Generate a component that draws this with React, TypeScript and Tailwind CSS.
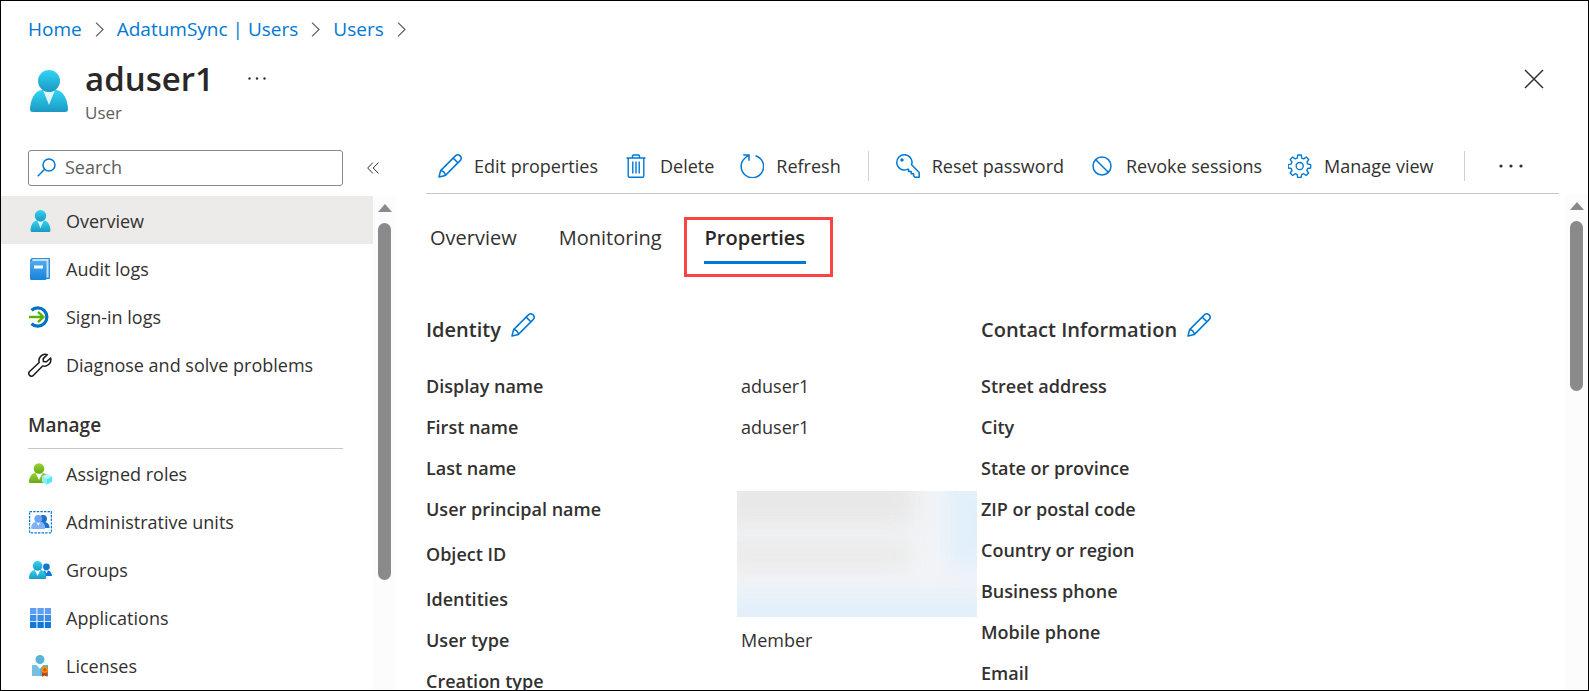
import React from "react";

type IconProps = { className?: string };

const Pencil = ({ className }: IconProps) => (
  <svg viewBox="0 0 24 24" className={className} fill="none" stroke="#0078d4" strokeWidth="1.5" strokeLinejoin="round">
    <path d="M1 23 L2.6 16.6 L17.4 1.9 A3.2 3.2 0 0 1 22.1 6.6 L7.4 21.4 Z M15.2 4.1 L19.9 8.8 M2.6 16.6 Q6.4 17 7.4 21.4" />
  </svg>
);

const Trash = () => (
  <svg viewBox="0 0 20 24" className="h-6 w-5" fill="none" stroke="#0078d4" strokeWidth="1.4" strokeLinejoin="round">
    <path d="M0.5 4 H19.5 M6.5 4 V2 Q6.5 1 7.5 1 H12.5 Q13.5 1 13.5 2 V4 M2.2 4 V22 Q2.2 23.2 3.4 23.2 H16.600 Q17.8 23.2 17.8 22 V4 M6.8 7.5 V19.5 M10 7.5 V19.5 M13.2 7.5 V19.5" />
  </svg>
);

const Refresh = () => (
  <svg viewBox="0 0 24 24" className="size-6" fill="none" stroke="#0078d4" strokeWidth="1.5">
    <path d="M15.500 1.700 A11.200 11.200 0 1 1 5 4 L8.800 1.200 M3.200 1 H9 V6.800" />
  </svg>
);

const Key = () => (
  <svg viewBox="0 0 24 24" className="size-6" fill="none" stroke="#0078d4" strokeWidth="1.5" strokeLinejoin="round">
    <path d="M15.6 10.8 A7.6 7.6 0 1 0 10.8 15.6 L12.6 15.2 V17.4 H15.2 V19.8 H17.6 V21.8 L19 23.2 H23.2 V18.6 Z" />
    <circle cx="6" cy="6" r="1.7" fill="#0078d4" stroke="none" />
  </svg>
);

const Block = () => (
  <svg viewBox="0 0 20 20" className="size-5" fill="none" stroke="#0078d4" strokeWidth="1.5">
    <circle cx="10" cy="10" r="9" />
    <path d="M3.7 3.7 L16.3 16.3" />
  </svg>
);

const GEAR =
  "M10.2 1 h3.6 l.5 3.2 2.1.9 2.6-1.9 2.6 2.6-1.9 2.6.8 2 3.1.6v3.6l-3.1.5-.9 2.1 1.9 2.6-2.6 2.6-2.6-1.9-2.1.9-.5 3.1h-3.6l-.5-3.1-2.1-.9-2.6 1.9-2.6-2.6 1.9-2.6-.9-2.1-3.1-.5v-3.6l3.1-.5.9-2.1-1.9-2.6 2.6-2.6 2.6 1.9 2.1-.9z";
const Gear = () => (
  <svg viewBox="0 0 25 25" className="size-6" fill="none" stroke="#0078d4" strokeWidth="1.4" strokeLinejoin="round">
    <path d={GEAR} />
    <circle cx="12.2" cy="12.6" r="3.7" />
  </svg>
);

const UserIcon = ({ className }: IconProps) => (
  <svg viewBox="0 0 38 42" className={className}>
    <defs>
      <linearGradient id="user" x1="0" y1="0" x2="0" y2="1">
        <stop offset="0" stopColor="#32d4f5" />
        <stop offset="1" stopColor="#1c98c2" />
      </linearGradient>
    </defs>
    <path d="M0 39.5 C0 30 5 20 12 20 H26 C33 20 38 30 38 39.5 Q38 42 35 42 H3 Q0 42 0 39.5Z" fill="url(#user)" />
    <path d="M13 20 L19 35 L25 20 Q19 24 13 20Z" fill="#fff" fillOpacity=".85" />
    <circle cx="19" cy="11" r="11" fill="url(#user)" />
  </svg>
);

const Book = () => (
  <svg viewBox="0 0 20 22" className="h-[22px] w-5">
    <defs>
      <linearGradient id="book" x1="0" y1="0" x2="0" y2="1">
        <stop offset="0" stopColor="#50aaf0" />
        <stop offset="1" stopColor="#1683da" />
      </linearGradient>
    </defs>
    <path d="M3 0 H19 Q20 0 20 1 V20 Q20 21 19 21 H2 L0 3 Q0 0 3 0Z" fill="#2e8fd8" />
    <path d="M3.5 1 H18.6 V19.6 H16 V3 H2 Q2 1 3.5 1Z" fill="#c3e1f8" />
    <path d="M0 3 H16.5 V20.5 Q16.5 22 15 22 H1.5 Q0 22 0 20.5Z" fill="url(#book)" />
    <rect x="4" y="7.5" width="9" height="3" fill="#fff" />
  </svg>
);

const SignIn = () => (
  <svg viewBox="0 0 22 22" className="size-[22px]" fill="none">
    <path d="M2.5 4.2 A9.2 9.2 0 1 1 2.5 17.8" stroke="#0072c6" strokeWidth="3.2" />
    <path d="M0 11 H14 M9 5.8 L14.4 11 L9 16.2" stroke="#59b200" strokeWidth="2.4" />
  </svg>
);

const Wrench = () => (
  <svg viewBox="0 0 24 24" className="size-6" fill="none" stroke="#1b1a19" strokeWidth="1.5" strokeLinejoin="round">
    <path d="M19.3 1.6 A6.4 6.4 0 0 0 11.2 9.5 L1.6 18.5 A2.7 2.7 0 0 0 5.5 22.3 L14.6 12.9 A6.4 6.4 0 0 0 22.6 5 L18.5 8.8 L15.4 8.6 L15.2 5.6 Z" />
  </svg>
);

const Roles = () => (
  <svg viewBox="0 0 23 22" className="h-[22px] w-[23px]">
    <defs>
      <linearGradient id="roles" x1="0" y1="0" x2="0" y2="1">
        <stop offset="0" stopColor="#98d62c" />
        <stop offset="1" stopColor="#6aa51c" />
      </linearGradient>
    </defs>
    <path d="M0 19 C0 14 3 10 6 10 H14 C17 10 19 13 19 16 V20 H1 Q0 20 0 19Z" fill="url(#roles)" />
    <path d="M6.6 10 L10 17 L13.4 10Z" fill="#fff" />
    <circle cx="10" cy="5.5" r="5.3" fill="url(#roles)" />
    <path d="M18 11 L23 13.5 V18.8 L18 21.6 L13 18.8 V13.5Z" fill="#50e6ff" />
    <path d="M18 11 L23 13.5 L18 16 L13 13.5Z" fill="#c3f1ff" />
    <path d="M18 16 L13 13.5 V18.8 L18 21.6Z" fill="#8eedff" />
  </svg>
);

const Units = () => (
  <svg viewBox="0 0 23 23" className="size-[23px]">
    <rect x=".6" y=".6" width="21.8" height="21.2" fill="none" stroke="#0078d4" strokeWidth="1.2" strokeDasharray="2.4 1.2" />
    <circle cx="14.2" cy="7.8" r="3.8" fill="#1f6fc8" />
    <path d="M11 17 C11 13 13 11 15 11 C18.500 11 20.500 13.500 20.500 17Z" fill="#1f6fc8" />
    <path d="M2.200 17 C2.200 13 4.500 11 7 11 H11.500 C14 11 16.200 13 16.200 17 Q16.200 18 15 18 H3 Q2.200 18 2.200 17Z" fill="#7fb2f7" />
    <path d="M7.400 11 L9.300 15 L11.200 11Z" fill="#fff" />
    <circle cx="9.300" cy="7.800" r="3.900" fill="#6aa5f5" />
  </svg>
);

const Groups = () => (
  <svg viewBox="0 0 23 18" className="h-[18px] w-[23px]">
    <circle cx="17.400" cy="5.800" r="3.400" fill="#0f78d4" />
    <path d="M12 15 C13 11 15 9.200 17.400 9.200 C21 9.200 23 12 23 15Z" fill="#0f78d4" />
    <path d="M16 9.400 L17.500 12.400 L19 9.400Z" fill="#fff" />
    <path d="M0 17 C0 12 3 9 6 9 H11.500 C14.500 9 17.200 12 17.200 17 Q17.200 18 16 18 H1 Q0 18 0 17Z" fill="url(#user)" />
    <path d="M5.800 9 L8.600 15 L11.400 9Z" fill="#fff" />
    <circle cx="8.600" cy="4.900" r="4.800" fill="url(#user)" />
  </svg>
);

const Apps = () => (
  <svg viewBox="0 0 21 20" className="h-5 w-[21px]">
    {["#5ea0ef", "#3b8ee6", "#1279d8"].map((c, r) =>
      [0, 1, 2].map((n) => <rect key={c + n} x={n * 7.4} y={r * 7} width="6.400" height="6.200" fill={c} />)
    )}
  </svg>
);

const License = () => (
  <svg viewBox="0 0 17 22" className="h-[22px] w-[17px]">
    <path d="M0 10 L4.500 10 L8 14 L11.500 10 H16 V21 H0Z" fill="#76bfe0" />
    <path d="M8 14 L11.500 10 H16 V21 H8Z" fill="#59b4d9" />
    <circle cx="8" cy="4.500" r="4.500" fill="#59b4d9" />
    <path d="M10 16 H15.500 V22 L12.700 20 L10 22Z" fill="#c4420a" />
    <circle cx="12.800" cy="14.800" r="3.300" fill="#ff8c00" />
    <circle cx="12.800" cy="14.800" r="1.500" fill="#d15900" />
  </svg>
);

const Chevron = () => (
  <svg viewBox="0 0 9 15" className="h-[15px] w-[9px]" fill="none" stroke="#605e5c" strokeWidth="1.2">
    <path d="M1 0.600 L8 7.500 L1 14.400" />
  </svg>
);

const Dots = ({ className }: IconProps) => (
  <svg viewBox="0 0 24 4" className={className} fill="#323130">
    <circle cx="2" cy="2" r="1.600" />
    <circle cx="12" cy="2" r="1.600" />
    <circle cx="22" cy="2" r="1.600" />
  </svg>
);

const ScrollBar = ({ thumb }: { thumb: string }) => (
  <div className="flex w-[23px] shrink-0 flex-col items-center bg-[#fcfcfc] pt-2" aria-hidden="true">
    <svg viewBox="0 0 14 8" className="h-2 w-[14px]">
      <path d="M7 0 L14 8 H0Z" fill="#8a8a8a" />
    </svg>
    <div className={`mt-[11px] w-[13px] shrink-0 rounded-full bg-[#8a8a8a] ${thumb}`} />
  </div>
);

type NavEntry = { label: string; icon: React.ReactNode; active?: boolean };

const mainNav: NavEntry[] = [
  { label: "Overview", icon: <UserIcon className="h-[22px] w-[21px]" />, active: true },
  { label: "Audit logs", icon: <Book /> },
  { label: "Sign-in logs", icon: <SignIn /> },
  { label: "Diagnose and solve problems", icon: <Wrench /> },
];

const manageNav: NavEntry[] = [
  { label: "Assigned roles", icon: <Roles /> },
  { label: "Administrative units", icon: <Units /> },
  { label: "Groups", icon: <Groups /> },
  { label: "Applications", icon: <Apps /> },
  { label: "Licenses", icon: <License /> },
];

const NavList = ({ items }: { items: NavEntry[] }) => (
  <ul>
    {items.map((it) => (
      <li key={it.label}>
        <a
          href="#"
          aria-current={it.active ? "page" : undefined}
          className={`flex h-12 items-center gap-[14px] pt-0.5 pl-[27px] ${it.active ? "bg-[#edebe9]" : ""}`}
        >
          <span className="flex w-6 shrink-0 justify-center">{it.icon}</span>
          {it.label}
        </a>
      </li>
    ))}
  </ul>
);

const Tool = ({ icon, label }: { icon: React.ReactNode; label: string }) => (
  <button type="button" className="flex items-center gap-3 whitespace-nowrap">
    <span className="flex w-6 shrink-0 justify-center">{icon}</span>
    {label}
  </button>
);

type Row = { label: string; value?: string; tall?: boolean };

const identity: Row[] = [
  { label: "Display name", value: "aduser1" },
  { label: "First name", value: "aduser1" },
  { label: "Last name" },
  { label: "User principal name" },
  { label: "Object ID", tall: true },
  { label: "Identities", tall: true },
  { label: "User type", value: "Member" },
  { label: "Creation type" },
];

const contact: Row[] = [
  "Street address",
  "City",
  "State or province",
  "ZIP or postal code",
  "Country or region",
  "Business phone",
  "Mobile phone",
  "Email",
].map((label) => ({ label }));

const Section = ({ title, rows, children }: { title: string; rows: Row[]; children?: React.ReactNode }) => (
  <section className="relative">
    <div className="flex h-10 items-center gap-[10px]">
      <h2 className="text-[20px] font-semibold">{title}</h2>
      <button type="button" aria-label={`Edit ${title}`} className="pb-[10px]">
        <Pencil className="size-6" />
      </button>
    </div>
    <dl className="mt-4">
      {rows.map((r) => (
        <div key={r.label} className={`flex items-end ${r.tall ? "h-[45px]" : "h-[41px]"}`}>
          <dt className="w-[315px] shrink-0 leading-[41px] font-semibold">{r.label}</dt>
          <dd className="leading-[41px]">{r.value}</dd>
        </div>
      ))}
    </dl>
    {children}
  </section>
);

export default function App() {
  return (
    <div className="flex h-screen flex-col overflow-hidden border border-black bg-white font-['Open_Sans',sans-serif] text-[18px] leading-6 text-[#323130]">
      <header className="shrink-0 px-[27px]">
        <nav aria-label="Breadcrumb" className="flex h-14 items-center gap-[13px] text-[19px] text-[#0078d4]">
          <a href="#">Home</a>
          <Chevron />
          <a href="#">AdatumSync | Users</a>
          <Chevron />
          <a href="#">Users</a>
          <Chevron />
        </nav>
        <div className="flex h-[85px] items-start">
          <UserIcon className="mt-[13px] ml-[2px] h-[42px] w-[38px]" />
          <div className="ml-[17px]">
            <h1 className="text-[33px] leading-[44px] font-semibold text-[#292827]">aduser1</h1>
            <p className="text-[17px] leading-6 text-[#605e5c]">User</p>
          </div>
          <button type="button" aria-label="More" className="mt-5 ml-[34px]">
            <Dots className="h-[3px] w-[18px]" />
          </button>
          <button type="button" aria-label="Close" className="mt-3 mr-[17px] ml-auto">
            <svg viewBox="0 0 20 20" className="size-5" stroke="#323130" strokeWidth="1.500">
              <path d="M1 1 L19 19 M19 1 L1 19" />
            </svg>
          </button>
        </div>
      </header>

      <div className="flex min-h-0 flex-1">
        <aside className="flex w-[395px] shrink-0 flex-col pt-2">
          <div className="flex h-[46px] shrink-0 items-start pl-[27px]">
            <label className="flex h-9 w-[315px] items-center gap-[9px] rounded-[3px] border border-[#8a8886] pb-0.5 pl-2">
              <svg viewBox="0 0 19 19" className="size-[19px] shrink-0" fill="none" stroke="#0078d4" strokeWidth="1.500">
                <circle cx="12" cy="7" r="6" />
                <path d="M7.700 11.300 L0.700 18.300" />
              </svg>
              <input type="text" aria-label="Search" placeholder="Search" className="w-full outline-none placeholder:text-[#605e5c]" />
            </label>
            <button type="button" aria-label="Collapse menu" className="mt-3 ml-6">
              <svg viewBox="0 0 12 12" className="size-3" fill="none" stroke="#323130">
                <path d="M6 0.500 L0.700 6 L6 11.500 M11.500 0.500 L6.200 6 L11.500 11.500" />
              </svg>
            </button>
          </div>
          <div className="flex min-h-0 flex-1">
            <nav aria-label="User menu" className="min-w-0 flex-1 overflow-hidden">
              <NavList items={mainNav} />
              <h2 className="mr-[30px] ml-[27px] h-[61px] border-b border-[#c8c6c4] pt-[25px] text-[19px] font-semibold">Manage</h2>
              <NavList items={manageNav} />
            </nav>
            <ScrollBar thumb="h-[357px]" />
          </div>
        </aside>

        <main className="ml-[30px] flex min-w-0 flex-1 flex-col">
          <div className="mr-[29px] flex h-[52px] shrink-0 items-center border-b border-[#c8c6c4] pb-[3px] pl-3">
            <div className="flex gap-[26px]">
              <Tool icon={<Pencil className="size-6" />} label="Edit properties" />
              <Tool icon={<Trash />} label="Delete" />
              <Tool icon={<Refresh />} label="Refresh" />
            </div>
            <span className="mx-[27px] h-[30px] w-px bg-[#d2d0ce]" />
            <div className="flex gap-[26px]">
              <Tool icon={<Key />} label="Reset password" />
              <Tool icon={<Block />} label="Revoke sessions" />
              <Tool icon={<Gear />} label="Manage view" />
            </div>
            <span className="mr-[34px] ml-[30px] h-[30px] w-px bg-[#d2d0ce]" />
            <button type="button" aria-label="More commands">
              <Dots className="h-1 w-6" />
            </button>
          </div>

          <div className="flex min-h-0 flex-1">
            <div className="min-w-0 flex-1 overflow-hidden">
              <div role="tablist" className="mt-[23px] flex h-[60px] items-start text-[20px]">
                <button type="button" role="tab" aria-selected="false" className="mt-[9px] ml-1">
                  Overview
                </button>
                <button type="button" role="tab" aria-selected="false" className="mt-[9px] ml-[42px]">
                  Monitoring
                </button>
                <div className="ml-[22px] h-[60px] w-[149px] border-3 border-[#fb4343] pl-[17px]">
                  <button type="button" role="tab" aria-selected="true" className="mt-[6px] h-[38px] border-b-3 border-[#0078d4] px-px pb-[11px] font-semibold text-[#292827]">
                    Properties
                  </button>
                </div>
              </div>
              <div className="mt-[33px] grid grid-cols-[555px_1fr]">
                <Section title="Identity" rows={identity}>
                  <div className="absolute top-[181px] left-[311px] h-[126px] w-60 overflow-hidden bg-[#f4f5f8]" aria-hidden="true">
                    <div className="absolute -top-4 -left-5 h-[50px] w-[198px] bg-[#e7e7e7] blur-md" />
                    <div className="absolute top-[50px] -left-5 h-7 w-[195px] bg-[#e9e9e8] blur-md" />
                    <div className="absolute -top-3 left-[208px] h-[90px] w-16 bg-[#e0effa] blur-md" />
                    <div className="absolute top-[102px] -left-5 h-12 w-[280px] bg-[#e1effa] blur-md" />
                  </div>
                </Section>
                <Section title="Contact Information" rows={contact} />
              </div>
            </div>
            <ScrollBar thumb="h-[170px]" />
          </div>
        </main>
      </div>
    </div>
  );
}
